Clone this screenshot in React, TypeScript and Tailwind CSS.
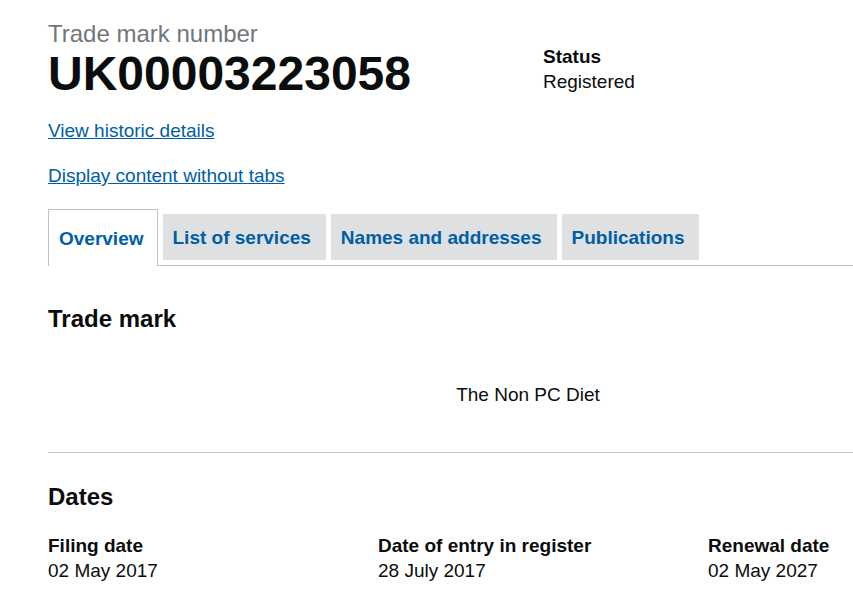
import React from 'react';

const tabs = [
  { label: 'Overview', active: true },
  { label: 'List of services', active: false },
  { label: 'Names and addresses', active: false },
  { label: 'Publications', active: false },
];

const dates = [
  { label: 'Filing date', value: '02 May 2017' },
  { label: 'Date of entry in register', value: '28 July 2017' },
  { label: 'Renewal date', value: '02 May 2027' },
];

export default function App() {
  return (
    <div className="h-screen w-full overflow-hidden bg-white font-['Liberation_Sans',Arial,sans-serif] text-[#0b0c0c]">
      <div className="w-[1008px] pl-12 pt-[19px]">
        {/* Header */}
        <div className="flex">
          <div className="w-[495px]">
            <p className="text-[24px] leading-[30px] text-[#6f777b]">Trade mark number</p>
            <h1 className="text-[48px] font-bold leading-[50px]">UK00003223058</h1>
          </div>
          <div className="pt-[25px]">
            <p className="text-[19px] font-bold leading-[25px]">Status</p>
            <p className="text-[19px] leading-[25px]">Registered</p>
          </div>
        </div>

        <div className="mt-[19px] flex flex-col gap-[20px] text-[19px] leading-[25px]">
          <a href="#" className="w-fit text-[#005ea5] underline">View historic details</a>
          <a href="#" className="w-fit text-[#005ea5] underline">Display content without tabs</a>
        </div>

        {/* Tabs */}
        <div className="mt-[21px] flex items-start gap-[5px] border-b border-[#bfc1c3]">
          {tabs.map((t) =>
            t.active ? (
              <div
                key={t.label}
                className="-mb-px border border-b-0 border-[#bfc1c3] bg-white pl-[10px] pr-[13px] pt-[16px] pb-[15px] text-[19px] font-bold leading-[25px] text-[#005ea5]"
              >
                {t.label}
              </div>
            ) : (
              <div
                key={t.label}
                className="mt-[5px] bg-[#dee0e2] pl-[10px] pr-[15px] pt-[11px] pb-[10px] text-[19px] font-bold leading-[25px] text-[#005ea5]"
              >
                {t.label}
              </div>
            )
          )}
        </div>

        {/* Trade mark */}
        <div className="border-b border-[#bfc1c3] pt-[38px] pb-[45px]">
          <h2 className="text-[24px] font-bold leading-[30px]">Trade mark</h2>
          <p className="mt-[48px] text-center text-[19px] leading-[25px]">The Non PC Diet</p>
        </div>

        {/* Dates */}
        <div className="pt-[29px]">
          <h2 className="text-[24px] font-bold leading-[30px]">Dates</h2>
          <div className="mt-[21px] grid grid-cols-[330px_330px_330px]">
            {dates.map((d) => (
              <div key={d.label}>
                <p className="text-[19px] font-bold leading-[25px]">{d.label}</p>
                <p className="text-[19px] leading-[25px]">{d.value}</p>
              </div>
            ))}
          </div>
        </div>
      </div>
    </div>
  );
}
